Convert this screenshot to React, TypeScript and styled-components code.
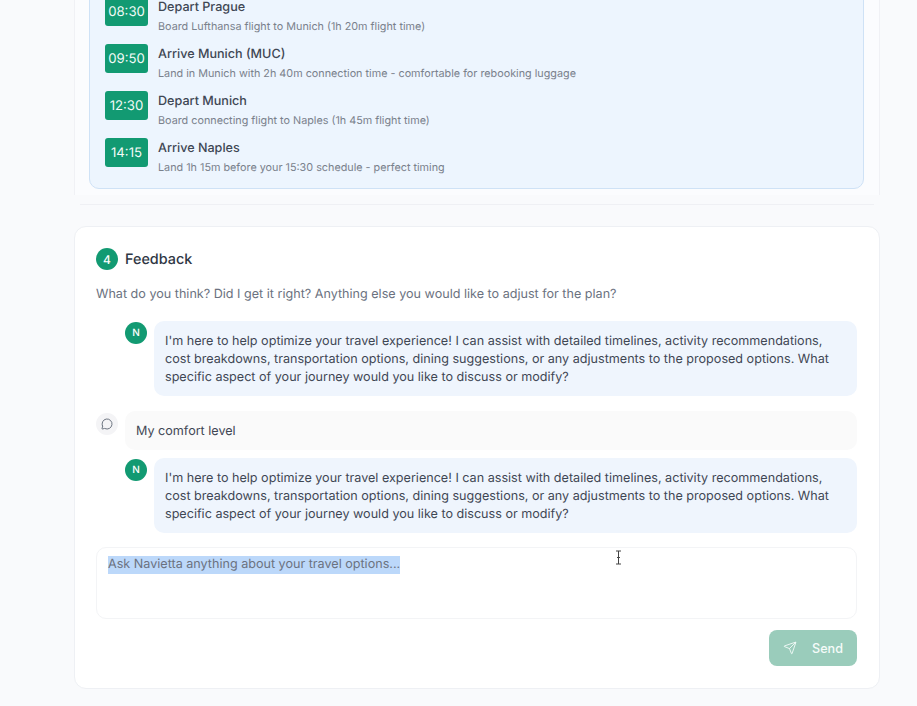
import * as React from "react";
import { MessageCircle, Send } from "lucide-react";
import styled, { createGlobalStyle } from "styled-components";

const GlobalStyle = createGlobalStyle`
  html, body {
    margin: 0;
    padding: 0;
    background: #f9fafc;
  }
  body {
    font-family: Inter, "Liberation Sans", sans-serif;
    text-rendering: geometricPrecision;
  }
`;

const Page = styled.div`
  width: 917px;
  height: 706px;
  overflow: hidden;
  position: relative;
  box-sizing: border-box;
  padding-left: 74px;
`;

const Column = styled.div`
  width: 806px;
  margin-top: -37px;
`;

const PlanSection = styled.section`
  background: #fbfcfe;
  border-left: 1px solid #f0f1f5;
  border-right: 1px solid #f0f1f5;
  padding: 0 15px 6px 14px;
`;

const TimelinePanel = styled.div`
  background: #edf5fe;
  border: 1px solid #cfe2f6;
  border-radius: 10px;
  padding: 33px 15px 13px;
  display: flex;
  flex-direction: column;
  gap: 10px;
`;

const TimelineRow = styled.div`
  display: flex;
  gap: 10px;
`;

const TimeBadge = styled.div`
  width: 43px;
  height: 29px;
  box-sizing: border-box;
  padding-top: 1px;
  flex: none;
  border-radius: 3px;
  background: #129a72;
  color: #f4fbf8;
  font-size: 13.2px;
  font-weight: 400;
  display: flex;
  align-items: center;
  justify-content: center;
`;

const RowTitle = styled.div`
  font-size: 12.6px;
  font-weight: 500;
  line-height: 16px;
  color: #3f4754;
  margin-top: 3px;
`;

const RowText = styled.div`
  font-size: 10.8px;
  line-height: 14px;
  color: #7a818c;
  margin-top: 4px;
`;

const Divider = styled.div`
  height: 1px;
  margin: 9px 6px 0;
  background: #eff0f4;
`;

const FeedbackCard = styled.section`
  margin-top: 21px;
  box-sizing: border-box;
  height: 463px;
  background: #fff;
  border: 1px solid #eef0f4;
  border-radius: 12px;
  padding: 21px 22px 0 21px;
`;

const CardHeader = styled.div`
  display: flex;
  align-items: center;
  gap: 7px;
`;

const StepNumber = styled.div`
  width: 22px;
  height: 22px;
  border-radius: 50%;
  background: #129a72;
  color: #fff;
  font-size: 12px;
  font-weight: 500;
  display: flex;
  align-items: center;
  justify-content: center;
`;

const CardTitle = styled.h2`
  margin: 0;
  font-size: 14.4px;
  font-weight: 500;
  color: #2f3744;
`;

const Description = styled.p`
  margin: 16px 0 0;
  font-size: 12.6px;
  line-height: 18px;
  color: #6b7280;
`;

const AssistantRow = styled.div<{ $top: number }>`
  display: flex;
  gap: 7px;
  margin: ${(p) => p.$top}px 0 0 29px;
`;

const Avatar = styled.div`
  width: 22px;
  height: 22px;
  flex: none;
  margin-top: 1px;
  border-radius: 50%;
  background: #129a72;
  color: #fff;
  font-size: 10px;
  font-weight: 500;
  display: flex;
  align-items: center;
  justify-content: center;
`;

const AssistantBubble = styled.div`
  flex: 1;
  background: #eff5fd;
  border-radius: 10px;
  padding: 12px 11px 9px;
  font-size: 12.6px;
  line-height: 18px;
  color: #3f4754;
`;

const UserRow = styled.div`
  display: flex;
  gap: 7px;
  margin-top: 15px;
`;

const UserIcon = styled.div`
  width: 22px;
  height: 22px;
  flex: none;
  margin-top: 2px;
  border-radius: 50%;
  background: #f4f4f6;
  color: #4b5563;
  display: flex;
  align-items: center;
  justify-content: center;
`;

const UserBubble = styled.div`
  flex: 1;
  height: 39px;
  box-sizing: border-box;
  background: #fafafa;
  border-radius: 10px;
  padding: 2px 11px 0;
  display: flex;
  align-items: center;
  font-size: 12.6px;
  color: #3f4754;
`;

const InputBox = styled.div`
  margin-top: 14px;
  height: 72px;
  box-sizing: border-box;
  border: 1px solid #f3f4f6;
  border-radius: 10px;
  padding: 8px 11px;
  font-size: 12.6px;
  line-height: 18px;
  color: #6b7280;
`;

const SelectedText = styled.span`
  display: inline-block;
  background: #bcd8fa;
`;

const Actions = styled.div`
  display: flex;
  justify-content: flex-end;
  margin-top: 11px;
`;

const SendButton = styled.button`
  width: 88px;
  height: 36px;
  border: none;
  border-radius: 8px;
  background: #9accbb;
  color: #f5fbf9;
  font-family: inherit;
  font-size: 12.6px;
  font-weight: 500;
  display: flex;
  align-items: center;
  justify-content: center;
  gap: 15px;
  padding: 0;
`;

const TextCursor = styled.svg`
  position: absolute;
  left: 615px;
  top: 550px;
`;

const timeline = [
  { time: "08:30", title: "Depart Prague", text: "Board Lufthansa flight to Munich (1h 20m flight time)" },
  { time: "09:50", title: "Arrive Munich (MUC)", text: "Land in Munich with 2h 40m connection time - comfortable for rebooking luggage" },
  { time: "12:30", title: "Depart Munich", text: "Board connecting flight to Naples (1h 45m flight time)" },
  { time: "14:15", title: "Arrive Naples", text: "Land 1h 15m before your 15:30 schedule - perfect timing" },
];

const reply =
  "I'm here to help optimize your travel experience! I can assist with detailed timelines, activity recommendations, cost breakdowns, transportation options, dining suggestions, or any adjustments to the proposed options. What specific aspect of your journey would you like to discuss or modify?";

const App = () => (
  <Page>
    <GlobalStyle />
    <Column>
      <PlanSection>
        <TimelinePanel>
          {timeline.map((item) => (
            <TimelineRow key={item.time}>
              <TimeBadge>{item.time}</TimeBadge>
              <div>
                <RowTitle>{item.title}</RowTitle>
                <RowText>{item.text}</RowText>
              </div>
            </TimelineRow>
          ))}
        </TimelinePanel>
      </PlanSection>
      <Divider />
      <FeedbackCard>
        <CardHeader>
          <StepNumber>4</StepNumber>
          <CardTitle>Feedback</CardTitle>
        </CardHeader>
        <Description>
          What do you think? Did I get it right? Anything else you would like to adjust for the plan?
        </Description>
        <AssistantRow $top={17}>
          <Avatar>N</Avatar>
          <AssistantBubble>{reply}</AssistantBubble>
        </AssistantRow>
        <UserRow>
          <UserIcon>
            <MessageCircle size={12} strokeWidth={1.6} />
          </UserIcon>
          <UserBubble>My comfort level</UserBubble>
        </UserRow>
        <AssistantRow $top={8}>
          <Avatar>N</Avatar>
          <AssistantBubble>{reply}</AssistantBubble>
        </AssistantRow>
        <InputBox>
          <SelectedText>Ask Navietta anything about your travel options...</SelectedText>
        </InputBox>
        <Actions>
          <SendButton>
            <Send size={14} strokeWidth={1.5} />
            Send
          </SendButton>
        </Actions>
      </FeedbackCard>
    </Column>
    <TextCursor width="7" height="15" viewBox="0 0 7 15" fill="none" stroke="#444" strokeWidth="1">
      <path d="M1 1h5M3.5 1v13M1 14h5M2 7.5h3" />
    </TextCursor>
  </Page>
);

export default App;
